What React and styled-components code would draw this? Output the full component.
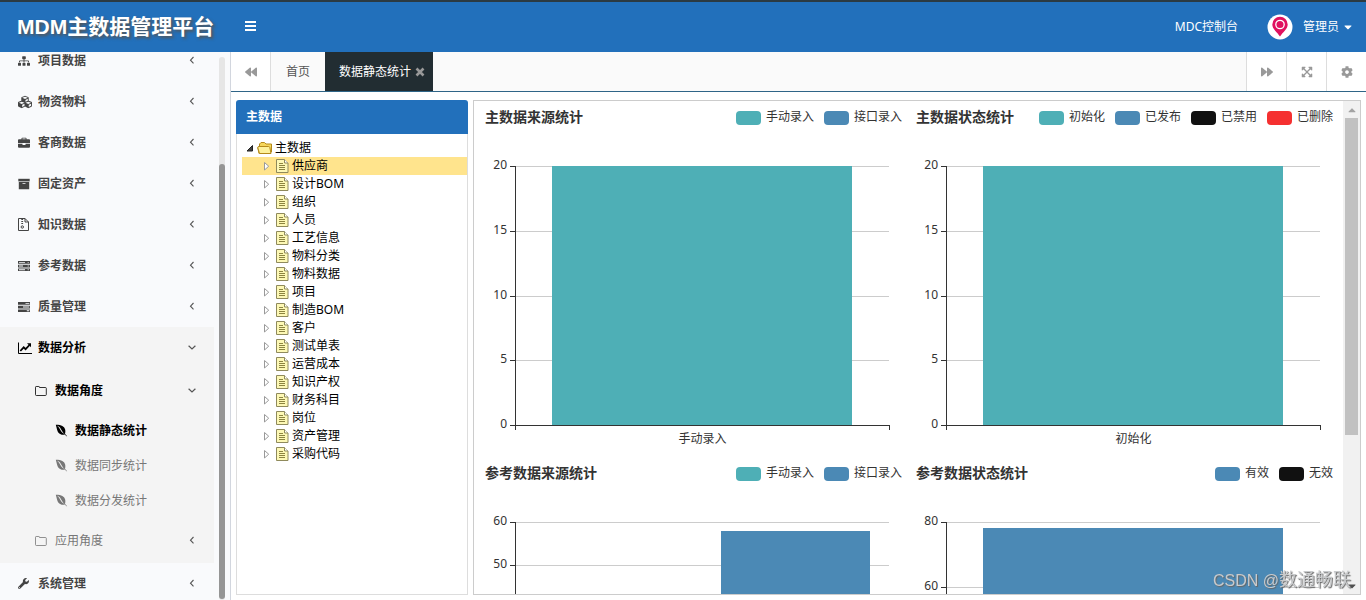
import React from "react";
import styled, { createGlobalStyle, css } from "styled-components";
import {
  FaSitemap, FaCubes, FaWrench, FaBackward, FaForward,
  FaExpandArrowsAlt, FaCog, FaCaretDown, FaEnvira, FaCaretUp,
} from "react-icons/fa";

const GlobalStyle = createGlobalStyle`
  * { box-sizing: border-box; }
  body {
    margin: 0;
    color: #333;
    background: #fff;
    font: 12px/18px "Noto Sans", "Noto Sans CJK SC", sans-serif;
  }
  button { font: inherit; color: inherit; background: none; border: 0; padding: 0; cursor: pointer; }
  a { color: inherit; text-decoration: none; }
  ul { list-style: none; margin: 0; padding: 0; }
  h1, h2 { margin: 0; }
  svg { display: block; flex: none; }
`;

const Page = styled.div`
  height: 100vh;
  display: flex;
  flex-direction: column;
  overflow: hidden;
`;

/* Header */
const Header = styled.header`
  flex: none;
  height: 52px;
  border-top: 2px solid #2b3a42;
  background: #2270bb;
  color: #fff;
  display: flex;
  align-items: center;
  padding: 0 12px 0 17px;
`;
const Brand = styled.h1`
  width: 228px;
  font: bold 21px/50px "Liberation Sans", "Noto Sans CJK SC", sans-serif;
  text-shadow: 2px 2px 3px #555;
  white-space: nowrap;
`;
const MenuToggle = styled.button`
  padding-bottom: 2px;
`;
const HeaderLinks = styled.div`
  margin-left: auto;
  display: flex;
  align-items: center;
  gap: 29px;
`;
const UserButton = styled.button`
  display: flex;
  align-items: center;
  gap: 10px;
`;
const UserName = styled.span`
  display: flex;
  align-items: center;
  gap: 3px;
`;

/* Side menu */
const Body = styled.div`
  flex: 1;
  min-height: 0;
  display: flex;
`;
const Sidebar = styled.nav`
  flex: none;
  width: 231px;
  display: flex;
  background: #f9fafc;
  border-right: 1px solid #d2d6de;
  overflow: hidden;
`;
const Menu = styled.ul`
  width: 214px;
  margin-top: -12px;
`;
const MenuGroup = styled.li`
  background: ${(p) => (p.$open ? "#f4f4f4" : "transparent")};
`;
const levels = {
  1: css`height: 41px; padding-left: 18px; font-weight: bold; color: #444;`,
  2: css`height: 45px; padding-left: 35px; color: #777;`,
  3: css`height: 35px; padding-left: 55px; color: #777;`,
};
const MenuLink = styled.a`
  display: flex;
  align-items: center;
  padding-right: 16px;
  ${(p) => levels[p.$level]}
  ${(p) => p.$active && css`color: #000; font-weight: bold;`}
`;
const MenuIcon = styled.span`
  width: 20px;
  display: flex;
`;
const MenuArrow = styled.span`
  width: 12px;
  margin-left: auto;
  color: #555;
  display: flex;
  justify-content: center;
`;
const SideTrack = styled.div`
  width: 6px;
  margin: 5px 0 0 5px;
  padding-top: 107px;
  background: #e6e6e6;
  border-radius: 3px;
  display: flex;
`;
const SideThumb = styled.div`
  flex: 1;
  background: #959595;
  border-radius: 3px;
  margin-bottom: 1px;
`;

/* Tab strip */
const Main = styled.main`
  flex: 1;
  min-width: 0;
  display: flex;
  flex-direction: column;
`;
const TabBar = styled.div`
  flex: none;
  height: 40px;
  display: flex;
  background: #fafafa;
  border-bottom: 1px solid #2f6587;
`;
const Tabs = styled.div`
  flex: 1;
  display: flex;
`;
const BarButton = styled.button`
  width: 40px;
  display: flex;
  align-items: center;
  justify-content: center;
  background: #fff;
  color: #999;
  border-${(p) => p.$edge}: 1px solid #ddd;
`;
const Tab = styled.button`
  padding: 0 ${(p) => (p.$active ? 8 : 15)}px 0 ${(p) => (p.$active ? 14 : 15)}px;
  display: flex;
  align-items: center;
  gap: 4px;
  color: ${(p) => (p.$active ? "#fff" : "#555")};
  background: ${(p) => (p.$active ? "#222d32" : "transparent")};
  svg { color: #999; }
`;

/* Work area */
const Content = styled.div`
  flex: 1;
  min-height: 0;
  display: flex;
  gap: 5px;
  padding: 8px 5px 5px;
`;
const TreePanel = styled.section`
  flex: none;
  width: 232px;
  display: flex;
  flex-direction: column;
`;
const TreeTitle = styled.h2`
  height: 34px;
  padding-left: 10px;
  font-size: 12px;
  line-height: 34px;
  color: #fff;
  background: #2270bb;
  border-radius: 3px 3px 0 0;
`;
const TreeBody = styled.div`
  flex: 1;
  padding: 5px 0 0 5px;
  border: 1px solid #ddd;
  border-top: 0;
  color: #000;
`;
const TreeRow = styled.button`
  width: 100%;
  height: 18px;
  display: flex;
  align-items: center;
  gap: ${(p) => (p.$root ? 2 : 3)}px;
  padding-left: ${(p) => (p.$root ? 4 : 21)}px;
  background: ${(p) => (p.$selected ? "#ffe48d" : "transparent")};
`;

/* Charts */
const ChartPanel = styled.section`
  flex: 1;
  min-width: 0;
  display: flex;
  border: 1px solid #ccc;
  overflow: hidden;
`;
const ChartGrid = styled.div`
  flex: 1;
  min-width: 0;
  display: grid;
  grid-template-columns: 1fr 1fr;
  grid-auto-rows: 356px;
  padding-right: 7px;
  overflow-y: auto;
  scrollbar-width: none;
`;
const ChartCard = styled.article`
  display: flex;
  flex-direction: column;
`;
const ChartHead = styled.header`
  height: 65px;
  padding: 7px 3px 0 11px;
  display: flex;
  align-items: flex-start;
  justify-content: space-between;
`;
const ChartTitle = styled.h2`
  font-size: 14px;
  line-height: 18px;
  color: #333;
`;
const Legend = styled.ul`
  display: flex;
  gap: 10px;
`;
const LegendItem = styled.li`
  display: flex;
  align-items: center;
  gap: 5px;
`;
const Swatch = styled.span`
  width: 25px;
  height: 14px;
  margin-top: 2px;
  border-radius: 4px;
  background: ${(p) => p.$color};
`;
const PlotRow = styled.div`
  height: 259px;
  display: flex;
  padding-right: 16px;
`;
const Scale = styled.div`
  width: 41px;
  display: flex;
  flex-direction: column;
`;
const ScaleStep = styled.div`
  flex: ${(p) => (p.$last ? "0 0 0" : "1 1 0")};
  min-height: 0;
  display: flex;
  justify-content: flex-end;
  align-items: flex-start;
  gap: 3px;
`;
const ScaleLabel = styled.span`
  margin-top: -10px;
`;
const Tick = styled.span`
  width: 5px;
  height: 1px;
  background: #333;
`;
const Plot = styled.div`
  flex: 1;
  display: grid;
  grid-template: 100% / 1fr;
`;
const Lines = styled.div`
  grid-area: 1 / 1;
  display: flex;
  flex-direction: column;
  border-left: 1px solid #333;
`;
const Line = styled.div`
  flex: 1;
  border-top: 1px solid #ccc;
`;
const Bars = styled.div`
  grid-area: 1 / 1;
  display: flex;
`;
const BarSlot = styled.div`
  flex: 1;
  display: flex;
  align-items: flex-end;
  justify-content: center;
`;
const Bar = styled.div`
  width: 80%;
  background: ${(p) => p.$color};
`;
const Categories = styled.div`
  height: 5px;
  margin: 0 15px 0 41px;
  border: 1px solid #333;
  border-bottom: 0;
  display: flex;
`;
const Category = styled.span`
  flex: 1;
  padding-top: 4px;
  text-align: center;
`;
const ChartTrack = styled.div`
  width: 17px;
  display: flex;
  flex-direction: column;
  align-items: center;
  background: #f1f1f1;
`;
const TrackArrow = styled.div`
  height: 17px;
  display: flex;
  align-items: center;
  color: ${(p) => p.$color};
`;
const TrackArea = styled.div`
  flex: 1;
  display: flex;
`;
const TrackThumb = styled.div`
  width: 13px;
  height: 69%;
  background: #c1c1c1;
`;
const Watermark = styled.div`
  position: fixed;
  right: 15px;
  bottom: 7px;
  font: 18px/24px "Liberation Sans", "Noto Sans CJK SC", sans-serif;
  color: #c8cacc;
  text-shadow: 1px 1px 1px #666;
  pointer-events: none;
  span { font-size: 16px; }
`;

const PinLogo = () => (
  <svg width="26" height="26" viewBox="0 0 26 26" aria-hidden="true">
    <circle cx="13" cy="13" r="12.5" fill="#fff" />
    <path d="M13 22.500C10 18 5.300 15 5.300 10.500a7.700 7.700 0 0 1 15.400 0C20.700 15 16 18 13 22.500z" fill="#e0115f" />
    <circle cx="13" cy="10.500" r="4.200" fill="none" stroke="#fff" strokeWidth="1.300" />
  </svg>
);
const BarsIcon = () => (
  <svg width="11" height="10" viewBox="0 0 11 10" fill="currentColor" aria-hidden="true">
    <path d="M0 0h11v2H0zM0 4h11v2H0zM0 8h11v2H0z" />
  </svg>
);
const CloseIcon = () => (
  <svg width="10" height="10" viewBox="0 0 10 10" stroke="currentColor" strokeWidth="2.600" aria-hidden="true">
    <path d="M1.500 1.500l7 7M8.500 1.500l-7 7" />
  </svg>
);
const AngleLeft = () => (
  <svg width="12" height="12" viewBox="0 0 12 12" fill="none" stroke="currentColor" strokeWidth="1.100" aria-hidden="true">
    <path d="M7.500 2 4.500 5.200 7.500 8.400" />
  </svg>
);
const AngleDown = () => (
  <svg width="12" height="12" viewBox="0 0 12 12" fill="none" stroke="currentColor" strokeWidth="1.200" aria-hidden="true">
    <path d="M2.600 3.800 6 7 9.400 3.800" />
  </svg>
);
const BriefcaseIcon = () => (
  <svg width="12" height="12" viewBox="0 0 12 12" fill="currentColor" aria-hidden="true">
    <path fillRule="evenodd" d="M3.500 2.200V1.300Q3.500.700 4.200.700h3.600q.7 0 .7.600v.9H11q1 0 1 .9V6H0V3.100q0-.9 1-.9zM4.400 2.200h3.200V1.600H4.400z" />
    <path d="M0 6.700h4.500v1.200h3V6.700H12v3.100q0 .9-1 .9H1q-1 0-1-.9z" />
  </svg>
);
const ArchiveIcon = () => (
  <svg width="12" height="12" viewBox="0 0 12 12" fill="currentColor" aria-hidden="true">
    <path d="M.300.800h11.400v2.600H.3z" />
    <path fillRule="evenodd" d="M.8 4h10.400v7.200H.8zM4.500 5.200v.9h3v-.9z" />
  </svg>
);
const ZipIcon = () => (
  <svg width="12" height="13" viewBox="0 0 12 13" fill="none" stroke="currentColor" aria-hidden="true">
    <path d="M.5.500H7L10.500 4v8.500H.5z" />
    <path d="M7 .5V4h3.500" />
    <path d="M4.200 1v6" strokeDasharray="1 1" strokeWidth="1.800" />
    <circle cx="4.300" cy="9" r="1.200" />
  </svg>
);
const ServerIcon = () => (
  <svg width="12" height="12" viewBox="0 0 12 12" fill="currentColor" aria-hidden="true">
    <path fillRule="evenodd" d="M0 1h12v2.700H0zM1 1.900v.9h6v-.9zM9.700 1.900v.9h1v-.9zM0 4.700h12v2.700H0zM1 5.600v.9h4v-.9zM9.700 5.600v.9h1v-.9zM0 8.400h12v2.700H0zM1 9.300v.9h6v-.9zM9.700 9.300v.9h1v-.9z" />
  </svg>
);
const TasksIcon = () => (
  <svg width="12" height="12" viewBox="0 0 12 12" fill="currentColor" aria-hidden="true">
    <path fillRule="evenodd" d="M0 1h12v2.700H0zM7.500 1.900v.9H11.300v-.9zM0 4.700h12v2.700H0zM5 5.600v.9h6.300v-.9zM0 8.400h12v2.700H0zM8.800 9.300v.9h2.500v-.9z" />
  </svg>
);
const LineChartIcon = () => (
  <svg width="14" height="12" viewBox="0 0 14 12" fill="none" stroke="currentColor" aria-hidden="true">
    <path d="M.5.500v11H14" />
    <path d="M2.300 9 5.700 5.300 7.600 7.200 11.500 3" strokeWidth="1.800" />
    <path d="M9 1.200h4v4z" fill="currentColor" stroke="none" />
  </svg>
);
const FolderOutline = () => (
  <svg width="12" height="12" viewBox="0 0 12 12" fill="none" stroke="currentColor" strokeOpacity=".8" aria-hidden="true">
    <path d="M.5 2.200Q.5 1.500 1.200 1.500H3.800Q4.500 1.500 4.500 2.200V2.500H10.400Q11.300 2.500 11.300 3.300V9.600Q11.300 10.500 10.400 10.500H1.400Q.5 10.500 .5 9.600z" />
  </svg>
);
const OpenArrow = () => (
  <svg width="9" height="10" viewBox="0 0 9 10" aria-hidden="true">
    <path d="M6.500 2.500v5.500H1z" fill="#444" stroke="#222" />
  </svg>
);
const ClosedArrow = () => (
  <svg width="10" height="10" viewBox="0 0 10 10" aria-hidden="true">
    <path d="M1.500 1.500v7.500L5.700 5.200z" fill="#fff" stroke="#999" />
  </svg>
);
const FolderOpen = () => (
  <svg width="16" height="14" viewBox="0 0 16 14" aria-hidden="true">
    <path d="M2 12.500 .8 6.500 2.500 5V3L4 1.500h3.500L9 3h5.500V11z" fill="#f5d65b" stroke="#b58a1b" />
    <path d="M2.500 12.500 .8 6.800Q.7 5.500 2 5.500H11.500q1 0 1.300 1L14 12.500z" fill="#fdf19b" stroke="#b58a1b" />
  </svg>
);
const DocIcon = () => (
  <svg width="13" height="14" viewBox="0 0 13 14" aria-hidden="true">
    <path d="M.5.500h8l3.500 3.500v9.500H.5z" fill="#fdf8b5" stroke="#8f8a5c" />
    <path d="M8.500.500V4H12" fill="#fff" stroke="#8f8a5c" />
    <path d="M3 4.500h4M3 6.500h6M3 8.500h6M3 10.500h6" stroke="#8c8440" />
  </svg>
);

const topItems = [
  ["项目数据", <FaSitemap size={12} />],
  ["物资物料", <FaCubes size={14} />],
  ["客商数据", <BriefcaseIcon />],
  ["固定资产", <ArchiveIcon />],
  ["知识数据", <ZipIcon />],
  ["参考数据", <ServerIcon />],
  ["质量管理", <TasksIcon />],
];
const leaves = ["数据静态统计", "数据同步统计", "数据分发统计"];
const treeItems = [
  "供应商", "设计BOM", "组织", "人员", "工艺信息", "物料分类", "物料数据", "项目", "制造BOM",
  "客户", "测试单表", "运营成本", "知识产权", "财务科目", "岗位", "资产管理", "采购代码",
];

const TEAL = "#4eafb6";
const BLUE = "#4b89b5";
const BLACK = "#111";
const RED = "#f53030";
const charts = [
  {
    title: "主数据来源统计",
    legend: [["手动录入", TEAL], ["接口录入", BLUE]],
    scale: [20, 15, 10, 5, 0],
    bars: [{ name: "手动录入", value: 20, color: TEAL }],
  },
  {
    title: "主数据状态统计",
    legend: [["初始化", TEAL], ["已发布", BLUE], ["已禁用", BLACK], ["已删除", RED]],
    scale: [20, 15, 10, 5, 0],
    bars: [{ name: "初始化", value: 20, color: TEAL }],
  },
  {
    title: "参考数据来源统计",
    legend: [["手动录入", TEAL], ["接口录入", BLUE]],
    scale: [60, 50, 40, 30, 20, 10, 0],
    bars: [{ name: "手动录入", value: 0, color: TEAL }, { name: "接口录入", value: 58, color: BLUE }],
  },
  {
    title: "参考数据状态统计",
    legend: [["有效", BLUE], ["无效", BLACK]],
    scale: [80, 60, 40, 20, 0],
    bars: [{ name: "有效", value: 78, color: BLUE }],
  },
];

function MenuItem({ level, icon, label, active, arrow }) {
  return (
    <MenuLink href="#" $level={level} $active={active}>
      <MenuIcon>{icon}</MenuIcon>
      {label}
      {arrow && <MenuArrow>{arrow === "down" ? <AngleDown /> : <AngleLeft />}</MenuArrow>}
    </MenuLink>
  );
}

function Chart({ title, legend, scale, bars }) {
  return (
    <ChartCard>
      <ChartHead>
        <ChartTitle>{title}</ChartTitle>
        <Legend>
          {legend.map(([name, color]) => (
            <LegendItem key={name}><Swatch $color={color} />{name}</LegendItem>
          ))}
        </Legend>
      </ChartHead>
      <PlotRow>
        <Scale>
          {scale.map((n, i) => (
            <ScaleStep key={n} $last={i === scale.length - 1}>
              <ScaleLabel>{n}</ScaleLabel>
              <Tick />
            </ScaleStep>
          ))}
        </Scale>
        <Plot>
          <Lines>{scale.slice(1).map((n) => <Line key={n} />)}</Lines>
          <Bars>
            {bars.map((b) => (
              <BarSlot key={b.name}>
                <Bar $color={b.color} style={{ height: `${(b.value / scale[0]) * 100}%` }} />
              </BarSlot>
            ))}
          </Bars>
        </Plot>
      </PlotRow>
      <Categories>
        {bars.map((b) => <Category key={b.name}>{b.name}</Category>)}
      </Categories>
    </ChartCard>
  );
}

export default function App() {
  return (
    <Page>
      <GlobalStyle />
      <Header>
        <Brand>MDM主数据管理平台</Brand>
        <MenuToggle aria-label="菜单"><BarsIcon /></MenuToggle>
        <HeaderLinks>
          <a href="#">MDC控制台</a>
          <UserButton>
            <PinLogo />
            <UserName>管理员<FaCaretDown size={12} /></UserName>
          </UserButton>
        </HeaderLinks>
      </Header>
      <Body>
        <Sidebar>
          <Menu>
            {topItems.map(([label, icon]) => (
              <MenuGroup key={label}><MenuItem level={1} icon={icon} label={label} arrow="left" /></MenuGroup>
            ))}
            <MenuGroup $open>
              <MenuItem level={1} icon={<LineChartIcon />} label="数据分析" active arrow="down" />
              <MenuItem level={2} icon={<FolderOutline />} label="数据角度" active arrow="down" />
              {leaves.map((label, i) => (
                <MenuItem key={label} level={3} icon={<FaEnvira size={13} />} label={label} active={i === 0} />
              ))}
              <MenuItem level={2} icon={<FolderOutline />} label="应用角度" arrow="left" />
            </MenuGroup>
            <MenuGroup><MenuItem level={1} icon={<FaWrench size={11} />} label="系统管理" arrow="left" /></MenuGroup>
          </Menu>
          <SideTrack aria-hidden="true"><SideThumb /></SideTrack>
        </Sidebar>
        <Main>
          <TabBar>
            <BarButton $edge="right" aria-label="向左"><FaBackward size={12} /></BarButton>
            <Tabs>
              <Tab>首页</Tab>
              <Tab $active>数据静态统计<CloseIcon /></Tab>
            </Tabs>
            <BarButton $edge="left" aria-label="向右"><FaForward size={12} /></BarButton>
            <BarButton $edge="left" aria-label="全屏"><FaExpandArrowsAlt size={12} /></BarButton>
            <BarButton $edge="left" aria-label="设置"><FaCog size={12} /></BarButton>
          </TabBar>
          <Content>
            <TreePanel>
              <TreeTitle>主数据</TreeTitle>
              <TreeBody>
                <TreeRow $root><OpenArrow /><FolderOpen />主数据</TreeRow>
                {treeItems.map((label, i) => (
                  <TreeRow key={label} $selected={i === 0}><ClosedArrow /><DocIcon />{label}</TreeRow>
                ))}
              </TreeBody>
            </TreePanel>
            <ChartPanel>
              <ChartGrid>{charts.map((c) => <Chart key={c.title} {...c} />)}</ChartGrid>
              <ChartTrack aria-hidden="true">
                <TrackArrow $color="#a3a3a3"><FaCaretUp size={12} /></TrackArrow>
                <TrackArea><TrackThumb /></TrackArea>
                <TrackArrow $color="#505050"><FaCaretDown size={12} /></TrackArrow>
              </ChartTrack>
            </ChartPanel>
          </Content>
        </Main>
      </Body>
      <Watermark><span>CSDN @</span>数通畅联</Watermark>
    </Page>
  );
}
